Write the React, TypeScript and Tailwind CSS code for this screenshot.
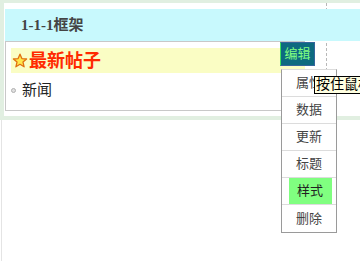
import React from "react";

const MENU_ITEMS = ["属性", "数据", "更新", "标题", "样式", "删除"];

const Star = () => (
  <svg width="16" height="16" viewBox="0 0 16 16" className="shrink-0">
    <path
      d="M8 1.2 L9.9 5.6 L14.6 6 L11 9.1 L12.1 13.8 L8 11.3 L3.9 13.8 L5 9.1 L1.4 6 L6.1 5.6 Z"
      fill="#ffe74a"
      stroke="#e07010"
      strokeWidth="1.3"
      strokeLinejoin="round"
    />
  </svg>
);

export default function App() {
  return (
    <div
      className="relative flex h-[261px] w-[360px] flex-col overflow-hidden bg-white"
      style={{ fontFamily: '"Liberation Serif", "Noto Sans CJK SC", serif' }}
    >
      {/* dashed guide behind the frame */}
      <div className="absolute left-[326px] top-[3px] h-[113px] border-l border-dashed border-[#b8b8b8]" />

      <div className="relative border-b-[4px] border-l-[4px] border-t-[3px] border-[#e1efe1] pb-[5px] pl-px pt-[6px]">
        <div className="flex h-[32px] items-center bg-[#c8f9fd] pl-[16px] text-[15px] font-bold text-[#444]">
          1-1-1框架
        </div>

        <div className="h-[70px] w-[300px] border border-r-0 border-[#c8c8c8] bg-white pl-[5px] pt-[6px]">
          <div className="flex h-[25px] items-center gap-px bg-[#fafdc4] pl-px">
            <Star />
            <span className="text-[18px] font-bold leading-none text-[#ff2a00]">最新帖子</span>
          </div>
          <div className="flex h-[34px] items-center gap-[6px]">
            <span className="h-[5px] w-[5px] rounded-full border border-[#b0b0b0] bg-[#e0e0e0]" />
            <span className="text-[15px] text-[#222]">新闻</span>
          </div>
        </div>
      </div>

      <div className="ml-px flex-1 border-l border-[#e4e4e4]" />

      {/* edit button */}
      <div className="absolute left-[280px] top-[42px] flex h-[24px] w-[35px] items-center justify-center border border-l-[#3ee05a] border-[#34659c] bg-[#0d6a80] text-[13px] text-[#80ff80]">
        编辑
      </div>

      {/* dropdown menu */}
      <div className="absolute left-[281px] top-[69px] w-[56px] border border-t-[#dcdcdc] border-[#9a9a9a] bg-white">
        {MENU_ITEMS.map((item, i) => (
          <div
            key={item}
            className={`flex h-[27px] items-center justify-center text-[13px] text-[#444] ${
              i < MENU_ITEMS.length - 1 ? "border-b border-[#dcdcdc]" : ""
            }`}
          >
            {item === "样式" ? (
              <span className="-mr-[2px] flex h-full w-[43px] items-center justify-center bg-[#80ff80] text-[#222]">
                {item}
              </span>
            ) : (
              item
            )}
          </div>
        ))}
      </div>

      {/* tooltip */}
      <div className="absolute left-[314px] top-[76px] flex h-[18px] items-center whitespace-nowrap border border-black bg-[#ffffe1] pl-px text-[14px] leading-none text-black">
        按住鼠标拖动
      </div>
    </div>
  );
}
